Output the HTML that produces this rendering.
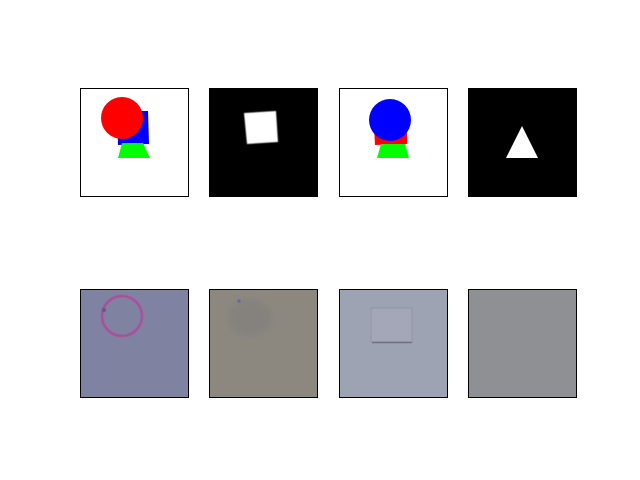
<!DOCTYPE html>
<html><head><meta charset="utf-8"><style>html,body{margin:0;padding:0;background:#fff;width:640px;height:480px;overflow:hidden}</style></head>
<body>
<svg width="640" height="480" xmlns="http://www.w3.org/2000/svg">
<defs>
<filter id="b"><feGaussianBlur stdDeviation="0.6"/></filter>
<filter id="b2"><feGaussianBlur stdDeviation="3"/></filter>
</defs>
<rect width="640" height="480" fill="#fff"/>
<!-- top row -->
<g>
<rect x="80.5" y="88.5" width="108" height="108" fill="#fff" stroke="#000"/>
<polygon points="117,111 148,111 149,144 118,145" fill="#0000ff"/>
<polygon points="122,143 143,143 150,158 118,158" fill="#00ff00"/>
<circle cx="122" cy="118" r="21" fill="#ff0000"/>
</g>
<g>
<rect x="209.5" y="88.5" width="108" height="108" fill="#000" stroke="#000"/>
<polygon points="244,113 276,111 278,142 247,144" fill="#fff" filter="url(#b)"/>
</g>
<g>
<rect x="339.5" y="88.5" width="108" height="108" fill="#fff" stroke="#000"/>
<polygon points="374,127 407,126 407,144 375,145" fill="#ff0000"/>
<polygon points="381,144 405,144 409,158 377,158" fill="#00ff00"/>
<circle cx="390" cy="120" r="21" fill="#0000ff"/>
</g>
<g>
<rect x="468.5" y="88.5" width="108" height="108" fill="#000" stroke="#000"/>
<polygon points="522,126 538,158 506,158" fill="#fff"/>
</g>
<!-- bottom row -->
<g>
<rect x="80.5" y="289.5" width="108" height="108" fill="#7f82a0" stroke="#000"/>
<circle cx="122" cy="316" r="20" fill="none" stroke="#b8409c" stroke-width="2" filter="url(#b)"/>
<circle cx="104" cy="310" r="2" fill="#5a5a80" filter="url(#b)"/>
</g>
<g>
<rect x="209.5" y="289.5" width="108" height="108" fill="#8c8880" stroke="#000"/>
<ellipse cx="250" cy="318" rx="22" ry="19" fill="#85827e" filter="url(#b2)"/>
<circle cx="239" cy="301" r="1.5" fill="#5a60a0" filter="url(#b)"/>
</g>
<g>
<rect x="339.5" y="289.5" width="108" height="108" fill="#9ea3b4" stroke="#000"/>
<rect x="371" y="308" width="41" height="34" fill="#a3a7b8" stroke="#8d90a0" stroke-width="0.8"/>
<line x1="372" y1="342.5" x2="412" y2="342.5" stroke="#6e7180" stroke-width="1.5"/>
</g>
<g>
<rect x="468.5" y="289.5" width="108" height="108" fill="#8e9094" stroke="#000"/>
</g>
</svg>
</body></html>
